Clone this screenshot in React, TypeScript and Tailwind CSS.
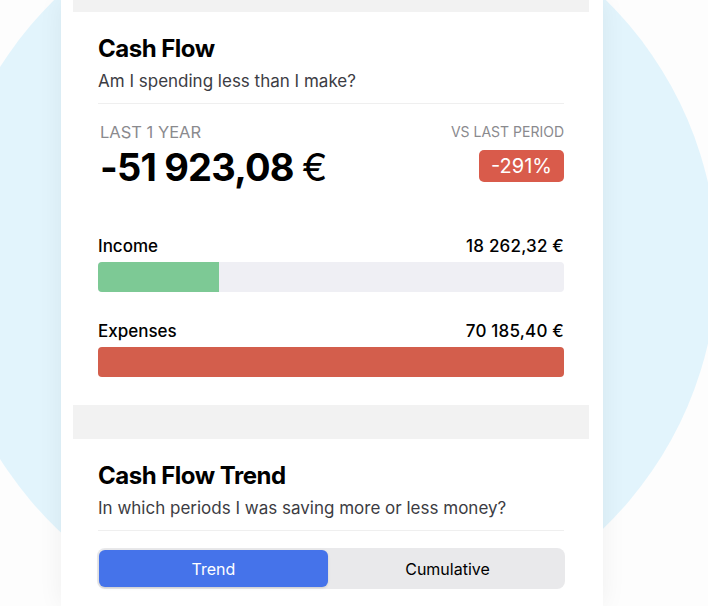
type BarRow = {
  label: string
  amount: string
  percent: number
  color: string
}

const rows: BarRow[] = [
  { label: 'Income', amount: '18 262,32 €', percent: 26, color: 'bg-[#7dc995]' },
  { label: 'Expenses', amount: '70 185,40 €', percent: 100, color: 'bg-[#d35e4c]' },
]

function Blob() {
  return (
    <svg
      className="absolute inset-0"
      width="708"
      height="606"
      viewBox="0 0 708 606"
    >
      <ellipse cx="330" cy="263" rx="387" ry="375" fill="#e2f4fc" />
    </svg>
  )
}

function Section({ title, subtitle, children }: { title: string; subtitle: string; children: React.ReactNode }) {
  return (
    <div className="bg-white px-[25px] pt-[22px]">
      <h2 className="text-[24px] leading-[30px] font-bold tracking-[-0.5px] text-black">{title}</h2>
      <p className="mt-[5px] text-[17px] leading-[24px] text-[#3c3c43]">{subtitle}</p>
      <div className="mt-[10px] h-px bg-[#efefef]" />
      {children}
    </div>
  )
}

export default function App() {
  return (
    <div
      className="relative w-[708px] h-[606px] overflow-hidden bg-[#fdfdfd]"
      style={{ fontFamily: 'Inter, "Noto Sans", sans-serif' }}
    >
      <Blob />
      <div className="relative ml-[61px] w-[542px] h-full bg-white pl-3 pr-[14px] shadow-[0_0_24px_rgba(0,0,0,0.06)]">
        <div className="h-3 bg-[#f2f2f2]" />
        <Section title="Cash Flow" subtitle="Am I spending less than I make?">
          <div className="mt-[18px] flex justify-between">
            <div>
              <div className="pl-[2px] text-[16.5px] leading-[20px] uppercase text-[#8a8a8e]">Last 1 Year</div>
              <div className="mt-[5px] pl-[2px] text-[38px] leading-[40px] font-bold tracking-[-0.8px] text-black">
                -51 923,08 <span className="font-normal">€</span>
              </div>
            </div>
            <div className="flex flex-col items-end">
              <div className="text-[14px] leading-[20px] uppercase text-[#8a8a8e]">vs last period</div>
              <div className="mt-2 rounded-[5px] bg-[#d95b4b] px-3 h-8 flex items-center text-[20px] text-white">
                -291%
              </div>
            </div>
          </div>
          <div className="mt-[48px] pb-[28px] flex flex-col gap-[28px]">
            {rows.map(row => (
              <div key={row.label}>
                <div className="flex justify-between text-[17px] leading-[22px] font-medium text-black">
                  <span>{row.label}</span>
                  <span className="tracking-[0.2px]">{row.amount}</span>
                </div>
                <div className="mt-[5px] h-[30px] rounded-[4px] bg-[#efeff4] overflow-hidden">
                  <div className={`h-full ${row.color}`} style={{ width: `${row.percent}%` }} />
                </div>
              </div>
            ))}
          </div>
        </Section>
        <div className="h-[34px] bg-[#f2f2f2]" />
        <Section title="Cash Flow Trend" subtitle="In which periods I was saving more or less money?">
          <div className="mt-[17px] flex h-[41px] rounded-lg bg-[#e9e9eb] p-[2px] -mx-px">
            <button className="w-[229px] rounded-md bg-[#4573ea] text-[16px] text-white shadow-sm">Trend</button>
            <button className="flex-1 pl-1 text-[16px] text-black">Cumulative</button>
          </div>
        </Section>
      </div>
    </div>
  )
}
